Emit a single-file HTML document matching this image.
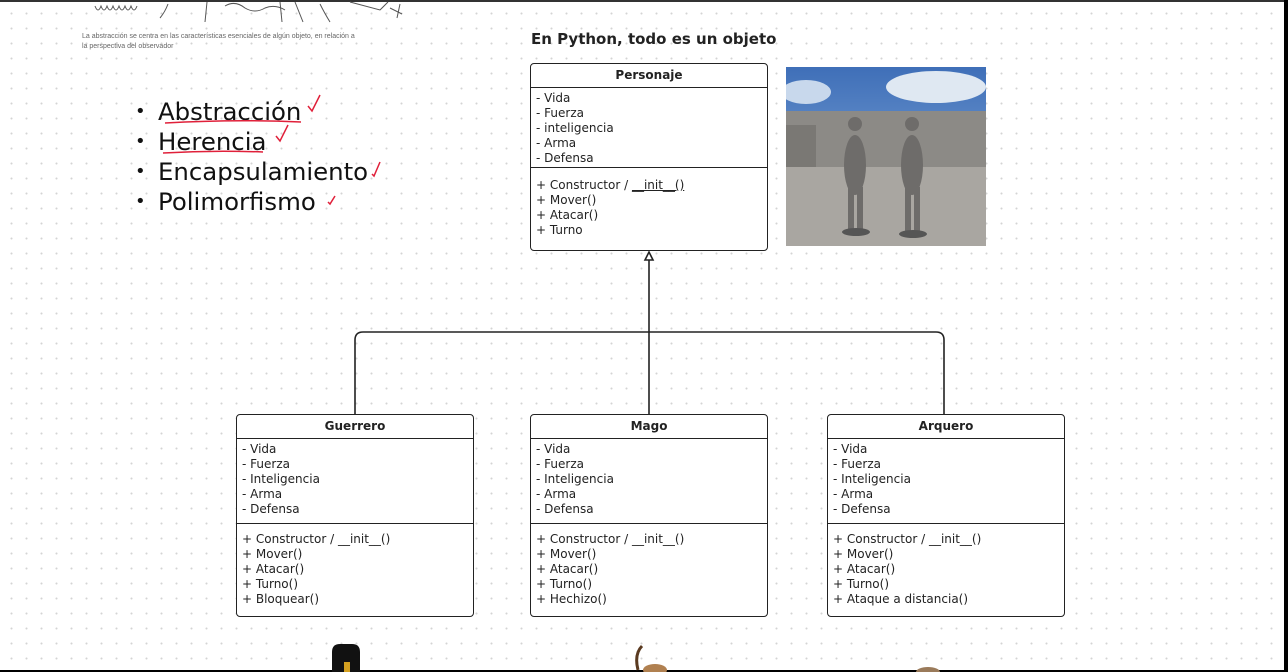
<!DOCTYPE html>
<html><head><meta charset="utf-8"><style>
*{margin:0;padding:0;box-sizing:border-box}
body{width:1288px;height:672px;overflow:hidden;position:relative;background:#fff;font-family:"DejaVu Sans","Liberation Sans",sans-serif;color:#222}
.grid{position:absolute;inset:0;background-image:radial-gradient(circle,#d4d4d4 0.8px,transparent 1.2px);background-size:15px 15px;background-position:4px 6px}
.box{position:absolute;border:1.6px solid #222;border-radius:4px;background:#fff;font-size:12px;line-height:15px}
.box .h{height:24px;border-bottom:1.6px solid #222;text-align:center;font-weight:bold;font-size:12px;line-height:23px}
.box .s{padding:3px 5px 2px 5px;border-bottom:1.6px solid #222}
.box .m{padding:8px 5px 0 5px}
.abs{position:absolute}
ul.b{position:absolute;left:135px;top:97px;list-style:none;font-size:24.4px;line-height:30px;color:#111}
ul.b li:before{content:"•";position:absolute;left:0;font-size:18px}
ul.b li{padding-left:23px;position:relative}
</style></head><body>
<div class="grid"></div>
<div class="abs" style="left:0;top:0;width:1288px;height:2px;background:#333"></div>
<div class="abs" style="left:1284px;top:0;width:4px;height:672px;background:#000"></div>
<div class="abs" style="left:0;top:670px;width:1288px;height:2px;background:#000"></div>
<svg class="abs" style="left:85px;top:0" width="330" height="24" viewBox="0 0 330 24" fill="none" stroke="#555" stroke-width="1">
<path d="M10 6 q3 8 6 0 q3 8 6 0 q3 8 6 0 q3 8 6 0 q3 8 6 0 q3 8 6 0 q3 8 6 0"/>
<path d="M75 18 q5-6 8-14"/><path d="M120 22 L122 2 M140 6 q10-6 20 2 q10 6 20 0 q10-4 20 2 M195 2 l2 20 M210 2 l8 20"/>
<path d="M235 4 q5 10 10 18"/><path d="M265 2 l30 8 l8-8"/><path d="M315 4 l-3 14 M305 8 l12 6"/></svg>
<div class="abs" style="left:82px;top:32px;font-size:7px;line-height:10px;color:#666;font-family:'Liberation Sans',sans-serif">La abstracción se centra en las características esenciales de algún objeto, en relación a<br>la perspectiva del observador</div>
<ul class="b">
<li>Abstracción</li><li>Herencia</li><li>Encapsulamiento</li><li>Polimorfismo</li></ul>
<svg class="abs" style="left:150px;top:90px" width="240" height="125" fill="none" stroke="#e0203a" stroke-width="1.5">
<path d="M15 33 q70 -4 136 -1"/><path d="M13 63 q50 -3 100 -1"/>
<path d="M158 16 l4 5 l8-16"/><path d="M126 46 l4 5 l8-16"/><path d="M222 84 l2 2 l6-14"/><path d="M178 112 l2 2 l5-8"/></svg>
<div class="abs" style="left:531px;top:30px;font-size:15px;font-weight:bold;color:#222">En Python, todo es un objeto</div>

<div class="box" style="left:530px;top:63px;width:238px;height:188px">
<div class="h">Personaje</div>
<div class="s" style="height:80px">- Vida<br>- Fuerza<br>- inteligencia<br>- Arma<br>- Defensa</div>
<div class="m" style="padding-top:10px">+ Constructor / <u>__init__()</u><br>+ Mover()<br>+ Atacar()<br>+ Turno</div></div>

<svg class="abs" style="left:786px;top:67px" width="200" height="179" viewBox="0 0 200 179">
<defs><linearGradient id="sk" x1="0" y1="0" x2="0" y2="1"><stop offset="0" stop-color="#3f6fb8"/><stop offset="1" stop-color="#8fb4e0"/></linearGradient></defs>
<rect width="200" height="179" fill="url(#sk)"/>
<ellipse cx="150" cy="20" rx="50" ry="16" fill="#dfe8f2"/><ellipse cx="20" cy="25" rx="25" ry="12" fill="#c8d8ec"/>
<rect y="44" width="200" height="60" fill="#8c8a86"/>
<rect y="58" width="30" height="60" fill="#7a7874"/>
<polygon points="0,120 0,179 200,179 200,100 0,100" fill="#a9a6a1"/>
<g fill="#6e6c6a"><ellipse cx="69" cy="98" rx="11" ry="30"/><circle cx="69" cy="57" r="7"/><rect x="62" y="120" width="6" height="42"/><rect x="71" y="120" width="6" height="42"/>
<ellipse cx="126" cy="98" rx="11" ry="30"/><circle cx="126" cy="57" r="7"/><rect x="119" y="120" width="6" height="44"/><rect x="128" y="120" width="6" height="44"/></g>
<ellipse cx="70" cy="165" rx="14" ry="4" fill="#555"/><ellipse cx="127" cy="167" rx="14" ry="4" fill="#555"/></svg>

<svg class="abs" style="left:0;top:0" width="1288" height="672" fill="none" stroke="#222" stroke-width="1.6">
<path d="M649 258 V414"/><path d="M645 260 L649 252 L653 260 Z" fill="#fff"/>
<path d="M355 414 V340 q0-8 8-8 H936 q8 0 8 8 V414"/></svg>

<div class="box" style="left:236px;top:414px;width:238px;height:203px">
<div class="h">Guerrero</div>
<div class="s" style="height:85px">- Vida<br>- Fuerza<br>- Inteligencia<br>- Arma<br>- Defensa</div>
<div class="m">+ Constructor / __init__()<br>+ Mover()<br>+ Atacar()<br>+ Turno()<br>+ Bloquear()</div></div>
<div class="box" style="left:530px;top:414px;width:238px;height:203px">
<div class="h">Mago</div>
<div class="s" style="height:85px">- Vida<br>- Fuerza<br>- Inteligencia<br>- Arma<br>- Defensa</div>
<div class="m">+ Constructor / __init__()<br>+ Mover()<br>+ Atacar()<br>+ Turno()<br>+ Hechizo()</div></div>
<div class="box" style="left:827px;top:414px;width:238px;height:203px">
<div class="h">Arquero</div>
<div class="s" style="height:85px">- Vida<br>- Fuerza<br>- Inteligencia<br>- Arma<br>- Defensa</div>
<div class="m">+ Constructor / __init__()<br>+ Mover()<br>+ Atacar()<br>+ Turno()<br>+ Ataque a distancia()</div></div>

<svg class="abs" style="left:320px;top:640px" width="650" height="32">
<path d="M12 32 V12 q0-8 8-8 h12 q8 0 8 8 V32Z" fill="#111"/><rect x="24" y="22" width="6" height="10" fill="#d4a020"/>
<path d="M318 30 q-4-16 4-24" stroke="#5a3a20" stroke-width="3" fill="none"/><ellipse cx="335" cy="30" rx="12" ry="6" fill="#b08050"/>
<ellipse cx="608" cy="32" rx="12" ry="5" fill="#9a7a5a"/></svg>
</body></html>
